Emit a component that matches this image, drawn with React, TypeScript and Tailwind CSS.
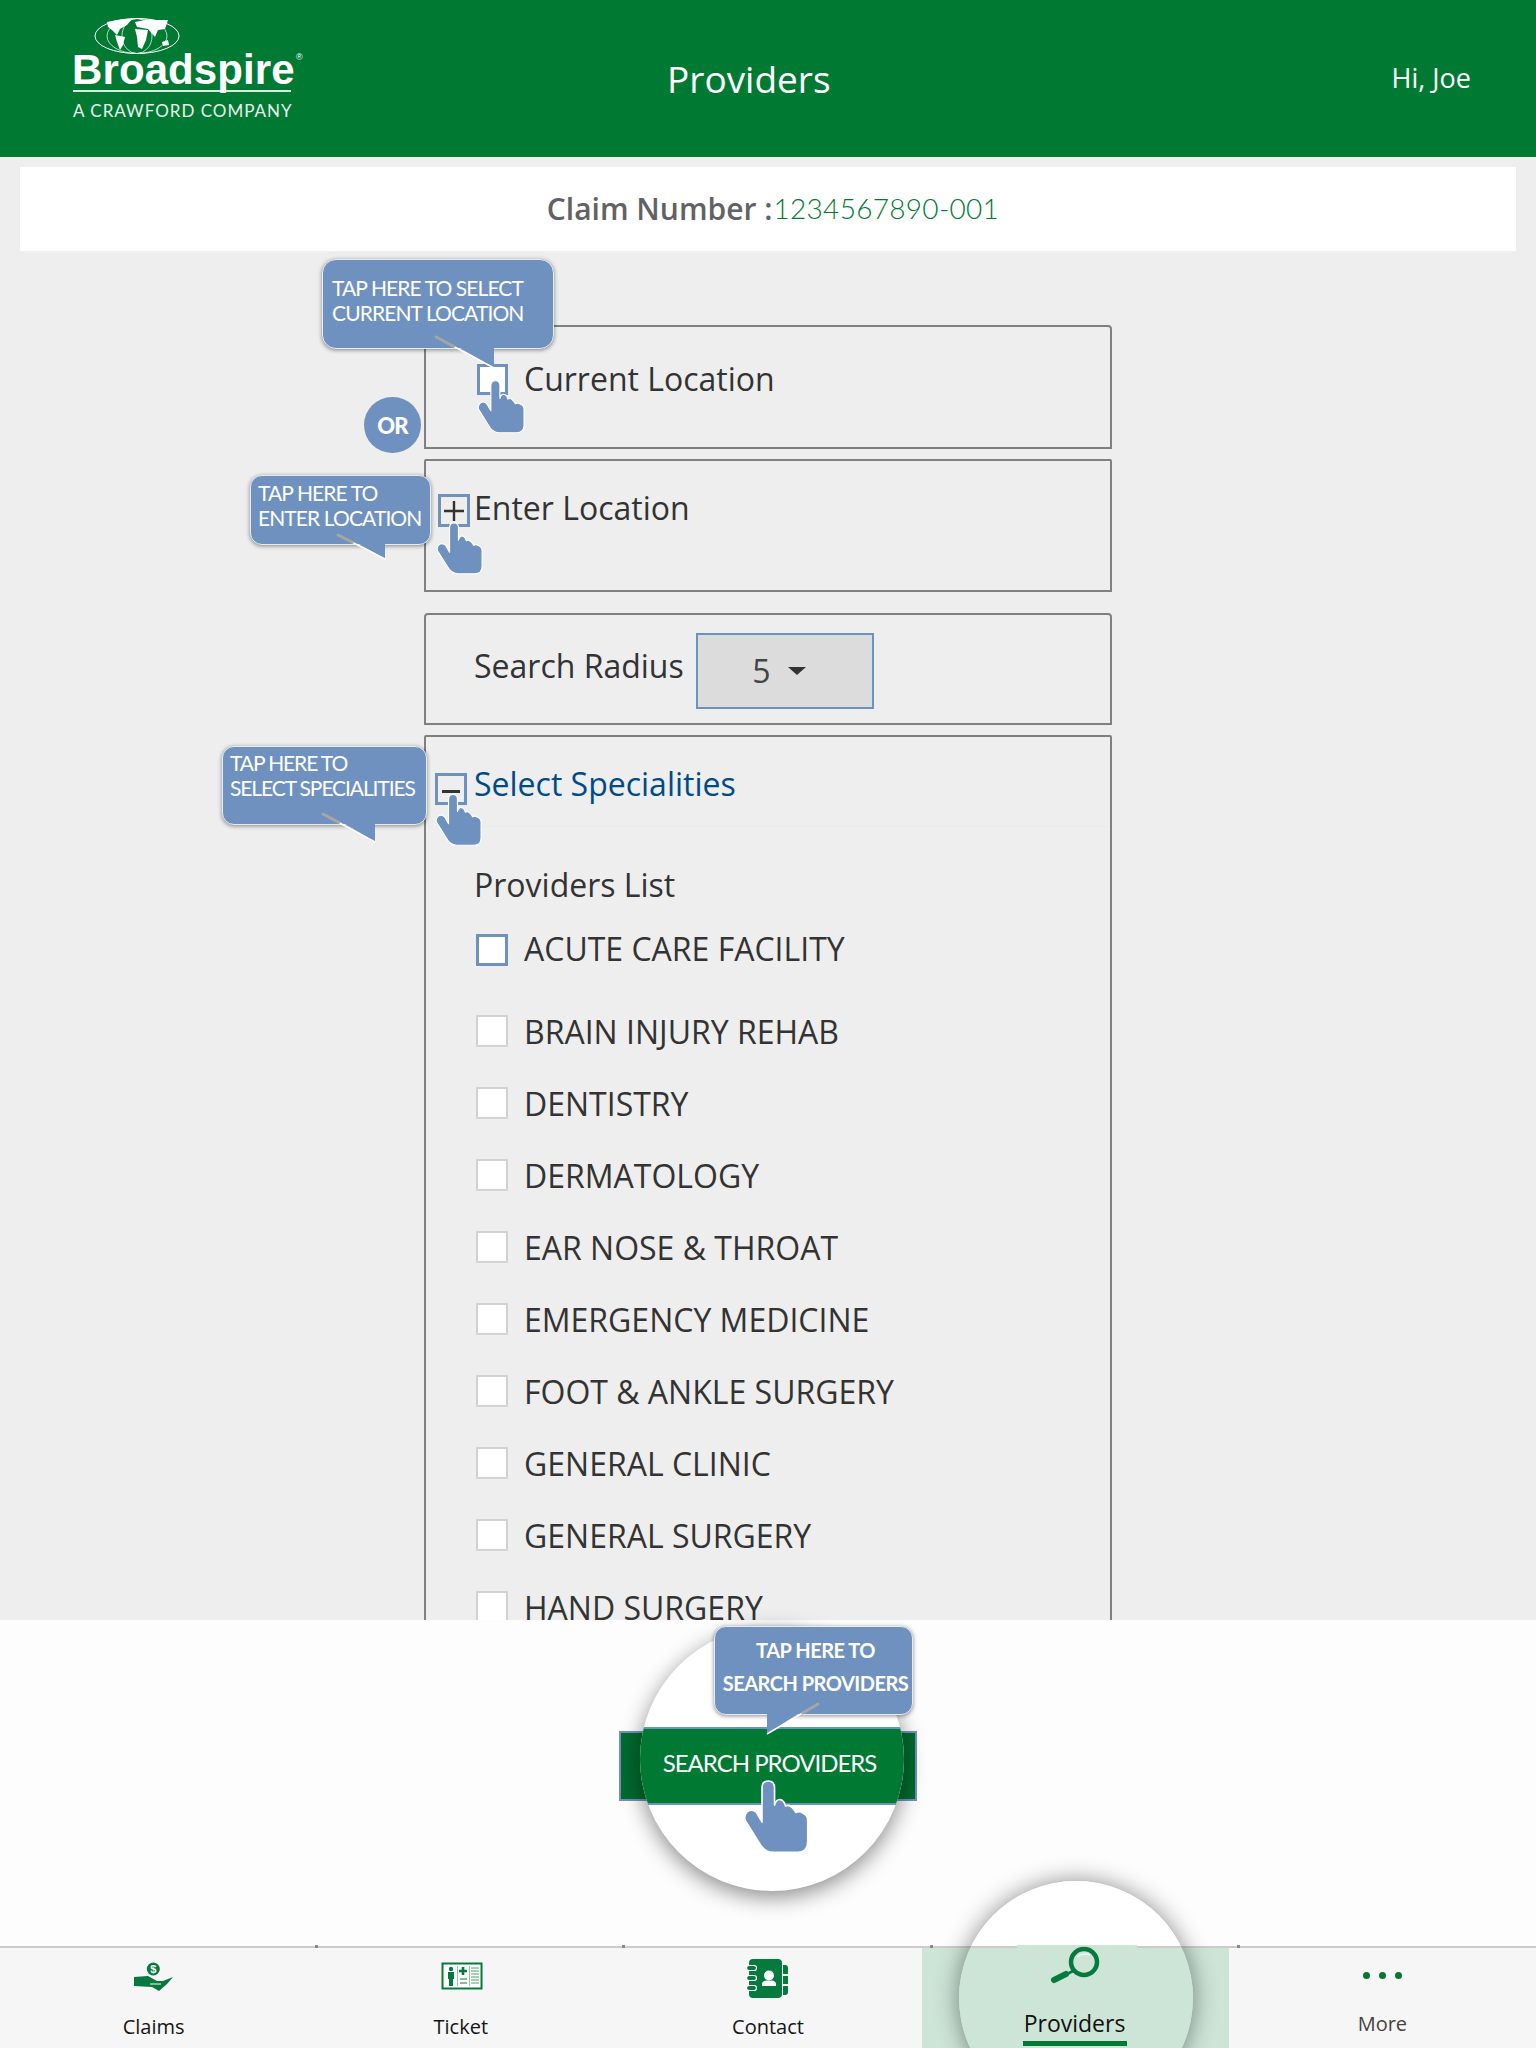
import React from "react";

const HAND = "M55 22 Q55 0 75 0 Q94 0 94 22 L94 75 Q100 55 112 58 Q124 60 128 78 Q138 72 148 82 Q155 88 160 98 Q170 92 182 100 Q197 106 197 122 L197 190 Q197 222 165 222 L90 222 Q62 222 45 190 L4 124 Q-4 108 10 95 Q25 85 38 98 L55 128 Z";

function Hand({ className }: { className: string }) {
  return (
    <svg viewBox="-4 -2 205 228" className={className}>
      <path d={HAND} fill="#6f91bf" stroke="#ffffff" strokeWidth="5" strokeLinejoin="round" />
    </svg>
  );
}

function Tail({ w, h, poly, line }: { w: number; h: number; poly: string; line: [number, number, number, number] }) {
  return (
    <svg width={w} height={h + 22} className="absolute left-0 top-0 overflow-visible">
      <polygon points={poly} fill="#6f91bf" />
      <line x1={line[0]} y1={line[1]} x2={line[2]} y2={line[3]} stroke="#ffffff" strokeWidth="1.5" />
      <line x1={line[0]} y1={line[1]} x2={line[0] + (line[2] - line[0]) * 0.3} y2={line[1] + (line[3] - line[1]) * 0.3} stroke="#a5a5a5" strokeWidth="3" strokeLinecap="round" />
    </svg>
  );
}

function Check({ active }: { active?: boolean }) {
  return <span className={active ? "block h-[32px] w-[32px] shrink-0 border-[3px] border-[#6f91bf] bg-white" : "block h-[32px] w-[32px] shrink-0 border-2 border-[#d2d2d2] bg-white"} />;
}

const items = ["BRAIN INJURY REHAB", "DENTISTRY", "DERMATOLOGY", "EAR NOSE & THROAT", "EMERGENCY MEDICINE", "FOOT & ANKLE SURGERY", "GENERAL CLINIC", "GENERAL SURGERY", "HAND SURGERY"];

function Logo() {
  return (
    <div className="relative h-[157px] w-[300px] pl-[72px] pt-[17px] text-white">
      <svg width="88" height="38" viewBox="0 0 88 38" className="ml-[22px] block" fill="none" stroke="#ffffff">
        <ellipse cx="43" cy="19" rx="42" ry="17.5" strokeWidth="1" />
        <ellipse cx="43" cy="19" rx="30" ry="17.5" strokeWidth="0.7" />
        <ellipse cx="43" cy="19" rx="15" ry="17.5" strokeWidth="0.7" />
        <g fill="#ffffff" stroke="none">
          <polygon points="13,5 23,3 38,2 33,8 26,12 23,18 18,13 14,10" />
          <polygon points="21,18 31,20 29,28 26,33 23,25" />
          <polygon points="41,5 51,3 74,3 71,12 64,13 61,20 54,12 43,10" />
          <polygon points="41,12 54,13 52,23 48,32 44,30 43,20" />
          <polygon points="68,25 74,23 75,28 69,29" />
        </g>
      </svg>
      <div className="relative -mt-[4px] h-[38px] w-[222px] whitespace-nowrap font-['Liberation_Sans'] text-[42px] font-bold leading-[38px] tracking-[0.1px]">
        Broadspire
        <span className="absolute left-[224px] top-[-4px] text-[9px] font-normal leading-[20px] tracking-normal">®</span>
      </div>
      <div className="ml-[1px] mt-[1px] h-[2px] w-[218px] bg-[#d9ebdf]" />
      <div className="ml-[1px] mt-[9px] whitespace-nowrap font-['Lato'] text-[17px] leading-[20px] tracking-[1px] text-[#e9f3ec]">A CRAWFORD COMPANY</div>
    </div>
  );
}

function NavItem({ label, icon, tick, bold, children }: { label: string; icon: React.ReactNode; tick?: boolean; bold?: boolean; children?: React.ReactNode }) {
  return (
    <div className={bold ? "relative flex flex-col items-center bg-[#cde5d7]" : "relative flex flex-col items-center"}>
      {tick && <span className="absolute left-[8px] top-[-3px] h-[3px] w-[3px] bg-[#8a8a8a]" />}
      <div className="flex h-[64px] w-full justify-center">{icon}</div>
      {children ? children : <div className="h-[30px] text-[20px] leading-[30px] text-[#151515]">{label}</div>}
    </div>
  );
}

const G = "#067a3c";

export default function App() {
  return (
    <div className="relative flex h-[2048px] w-[1536px] flex-col overflow-hidden bg-[#eeeeee] font-['Open_Sans',sans-serif]">
      <header className="relative flex h-[157px] shrink-0 items-start justify-between bg-[#007a33] text-white">
        <Logo />
        <div className="absolute left-[667px] top-[52px] text-[37px] font-medium leading-[54px]">Providers</div>
        <div className="mr-[65px] mt-[58px] text-[27px] leading-[40px]">Hi, Joe</div>
      </header>

      <main className="min-h-0 flex-1 overflow-hidden pt-[10px]">
        <div className="mx-[20px] flex h-[84px] items-center justify-center bg-white pl-[10px]">
          <span className="-mt-[1px] text-[30px] font-semibold text-[#616166]">Claim Number :</span>
          <span className="-mt-[3px] ml-[1px] font-['Lato'] text-[28px] font-light tracking-[0.3px] text-[#007a33]">1234567890-001</span>
        </div>

        <div className="ml-[424px] mt-[74px] w-[688px]">
          <section className="h-[124px] rounded-t-[4px] border-2 border-[#808080] pl-[51px] pt-[37px]">
            <div className="flex h-[31px] items-center gap-[16px] text-[#333333]">
              <span className="block h-[31px] w-[31px] shrink-0 border-[3px] border-[#6f91bf] bg-white" />
              <span className="-mt-[2px] text-[32px] leading-[40px]">Current Location</span>
            </div>
          </section>

          <section className="mt-[10px] h-[133px] rounded-t-[2px] border-2 border-[#808080] pl-[12px] pt-[33px]">
            <div className="flex h-[33px] items-center gap-[4px] text-[#333333]">
              <span className="flex h-[33px] w-[32px] shrink-0 items-center justify-center border-[3px] border-[#6f91bf]">
                <svg width="20" height="20" viewBox="0 0 20 20"><path d="M10 0V20M0 10H20" stroke="#333" strokeWidth="2.4" /></svg>
              </span>
              <span className="-mt-[6px] text-[32px] leading-[40px]">Enter Location</span>
            </div>
          </section>

          <section className="mt-[21px] flex h-[112px] items-start rounded-t-[4px] border-2 border-[#808080] pl-[48px] pt-[18px]">
            <span className="mt-[13px] w-[222px] text-[32px] leading-[40px] text-[#333333]">Search Radius</span>
            <div className="flex h-[76px] w-[178px] items-center justify-center gap-[17px] border-2 border-[#6f91bf] bg-[#dcdcdc] pr-[12px]">
              <span className="text-[32px] leading-[40px] text-[#444444]">5</span>
              <span className="h-0 w-0 border-x-[9px] border-t-[8px] border-x-transparent border-t-[#333333]" />
            </div>
          </section>

          <section className="mt-[10px] h-[1000px] rounded-t-[2px] border-2 border-[#808080]">
            <div className="flex h-[90px] items-start gap-[7px] border-b border-[#eaeaea] pl-[9px] pt-[36px]">
              <span className="flex h-[32px] w-[32px] shrink-0 items-center justify-center border-[3px] border-[#6f91bf]">
                <span className="mt-[4px] block h-[3px] w-[18px] bg-[#333333]" />
              </span>
              <span className="-mt-[9px] text-[32px] leading-[40px] text-[#004b87]">Select Specialities</span>
            </div>
            <div className="ml-[48px] mt-[36px] text-[32px] leading-[44px] text-[#333333]">Providers List</div>
            <div className="ml-[50px] mt-[27px] flex h-[32px] items-center gap-[16px]">
              <Check active />
              <span className="-mt-[2px] text-[32px] leading-[40px] text-[#333333]">ACUTE CARE FACILITY</span>
            </div>
            <div className="ml-[50px] mt-[49px] flex flex-col gap-[40px]">
              {items.map((t) => (
                <div key={t} className="flex h-[32px] items-center gap-[16px]">
                  <Check />
                  <span className="pt-[2px] text-[32px] leading-[40px] text-[#333333]">{t}</span>
                </div>
              ))}
            </div>
          </section>
        </div>
      </main>

      <footer className="relative z-10 h-[326px] shrink-0 bg-[#fdfdfd] pt-[111px]">
        <div className="mx-auto h-[70px] w-[298px] border-2 border-[#6f91bf] bg-[#006b2d]" />
      </footer>

      <nav className="relative z-10 grid h-[102px] shrink-0 grid-cols-5 border-t-2 border-[#cccccc] bg-[#f6f6f6]">
        <NavItem label="Claims" icon={
          <svg width="70" height="50" viewBox="0 0 70 50" className="ml-[2px]">
            <circle cx="33.3" cy="21" r="6.5" fill={G} />
            <text x="33.3" y="25" textAnchor="middle" fontSize="11" fontWeight="700" fill="#ffffff" fontFamily="Liberation Sans">$</text>
            <polygon points="14,29 28,28 37,33 43,33 53,29 47,36 39,43 32,39 14,38" fill={G} />
            <path d="M30 36H41" stroke="#ffffff" strokeWidth="1" />
          </svg>
        } />
        <NavItem label="Ticket" tick icon={
          <svg width="60" height="45" viewBox="0 0 60 45" className="mt-[6px]">
            <rect x="11.5" y="9.5" width="39" height="25" fill="#ffffff" stroke={G} strokeWidth="2" />
            <circle cx="20" cy="15" r="2.2" fill={G} />
            <path d="M17 18H23V25H22V32H18V25H17Z" fill={G} />
            <path d="M26.5 12V32" stroke="#8fc4a5" strokeWidth="1" />
            <path d="M32 13V21M28 17H36" stroke={G} strokeWidth="2.6" />
            <path d="M29 25H36M29 29H36" stroke={G} strokeWidth="1.2" />
            <path d="M38.5 12V32" stroke="#8fc4a5" strokeWidth="1" />
            <path d="M40 14H48M40 17H48M40 20H48M40 23H48M40 26H48M40 29H48" stroke="#4c9f6f" strokeWidth="1.2" />
          </svg>
        } />
        <NavItem label="Contact" tick icon={
          <svg width="60" height="55" viewBox="0 0 60 55" className="ml-[2px] mt-[2px]">
            <rect x="10" y="9" width="33" height="39" rx="4" fill={G} />
            <path d="M44 15H46Q49 15 49 18V24H44ZM44 26H49V34H44ZM44 36H49V42Q49 45 46 45H44Z" fill={G} />
            <g fill={G} stroke="#ffffff" strokeWidth="1.2">
              <rect x="7.5" y="15.5" width="10" height="5" rx="2.5" />
              <rect x="7.5" y="25.5" width="10" height="5" rx="2.5" />
              <rect x="7.5" y="35.5" width="10" height="5" rx="2.5" />
            </g>
            <circle cx="30" cy="25.5" r="5" fill="#ffffff" />
            <path d="M23 36V34Q23 31 27 30.5H33Q37 31 37 34V36Z" fill="#ffffff" />
          </svg>
        } />
        <NavItem label="" tick bold icon={<span />} />
        <NavItem label="More" tick icon={
          <div className="mt-[24px] flex h-[8px] gap-[9px]">
            <span className="h-[7px] w-[7px] rounded-full bg-[#007a33]" />
            <span className="h-[7px] w-[7px] rounded-full bg-[#007a33]" />
            <span className="h-[7px] w-[7px] rounded-full bg-[#007a33]" />
          </div>
        }>
          <div className="-mt-[3px] h-[30px] text-[20px] leading-[30px] text-[#444444]">More</div>
        </NavItem>
      </nav>

      {/* Search spotlight */}
      <div className="absolute left-[640px] top-[1627px] z-20 h-[264px] w-[264px] overflow-hidden rounded-full bg-white shadow-[0_6px_22px_rgba(0,0,0,0.45)]">
        <div className="absolute left-0 top-[100px] flex h-[78px] w-[264px] items-center justify-center border-y-2 border-[#6f91bf] bg-[#007a33] pb-[6px] pr-[5px] font-['Lato'] text-[24px] tracking-[-1px] text-white">
          SEARCH PROVIDERS
        </div>
      </div>

      {/* Providers spotlight */}
      <div className="absolute left-[959px] top-[1881px] z-20 h-[234px] w-[234px] rounded-full bg-[linear-gradient(to_bottom,#ffffff_0,#ffffff_65px,#cccccc_65px,#cccccc_67px,#cde5d7_67px)] shadow-[0_0_24px_rgba(0,0,0,0.45)]">
        <div className="absolute left-[58px] top-[64px] h-[3px] w-[120px] bg-[#cde5d7]" />
        <svg width="70" height="50" viewBox="0 0 70 50" className="absolute left-[81px] top-[59px]">
          <circle cx="44" cy="22" r="13" fill="none" stroke={G} strokeWidth="4.5" />
          <path d="M37 17Q43 12 50 15" fill="none" stroke="#ffffff" strokeWidth="1" />
          <path d="M33 31L27 34" stroke={G} strokeWidth="3" />
          <path d="M26 34L14 40" stroke={G} strokeWidth="6" strokeLinecap="round" />
        </svg>
        <div className="absolute left-0 top-[126px] w-[234px] pr-[3px] text-center text-[23px] leading-[32px] text-[#111111]">Providers</div>
        <div className="absolute left-[64px] top-[160px] h-[5px] w-[104px] bg-[#007a33]" />
      </div>

      {/* Coach marks */}
      <div className="absolute left-[322px] top-[259px] z-30 h-[90px] w-[232px] whitespace-nowrap rounded-[14px] border border-[#e6ebf2] bg-[#6f91bf] pl-[9px] pt-[15px] font-['Lato'] text-[21px] leading-[25px] tracking-[-0.9px] text-white shadow-[0_1px_4px_rgba(0,0,0,0.45)]">
        <Tail w={232} h={90} poly="137,88 171,88 171,108" line={[113, 77, 171, 108]} />
        <div className="relative">TAP HERE TO SELECT<br />CURRENT LOCATION</div>
      </div>
      <Hand className="absolute left-[477px] top-[380px] z-30 h-[54px] w-[48px]" />

      <div className="absolute left-[364px] top-[397px] z-30 flex h-[56px] w-[57px] items-center justify-center rounded-full bg-[#6f91bf] font-['Lato'] text-[22px] font-black tracking-[-0.8px] text-white">OR</div>

      <div className="absolute left-[250px] top-[475px] z-30 h-[70px] w-[181px] whitespace-nowrap rounded-[12px] border border-[#e6ebf2] bg-[#6f91bf] pl-[7px] pt-[4px] font-['Lato'] text-[21px] leading-[25px] tracking-[-0.9px] text-white shadow-[0_1px_4px_rgba(0,0,0,0.45)]">
        <Tail w={181} h={70} poly="108,68 134,68 134,83" line={[87, 59, 134, 83]} />
        <div className="relative">TAP HERE TO<br />ENTER LOCATION</div>
      </div>
      <Hand className="absolute left-[436px] top-[522px] z-30 h-[53px] w-[47px]" />

      <div className="absolute left-[222px] top-[746px] z-30 h-[79px] w-[205px] whitespace-nowrap rounded-[12px] border border-[#e6ebf2] bg-[#6f91bf] pl-[7px] pt-[3px] font-['Lato'] text-[21px] leading-[25px] tracking-[-1.1px] text-white shadow-[0_1px_4px_rgba(0,0,0,0.45)]">
        <Tail w={205} h={79} poly="122,77 152,77 152,95" line={[100, 67, 152, 95]} />
        <div className="relative">TAP HERE TO<br />SELECT SPECIALITIES</div>
      </div>
      <Hand className="absolute left-[435px] top-[793px] z-30 h-[54px] w-[47px]" />

      <div className="absolute left-[714px] top-[1626px] z-30 h-[89px] w-[199px] whitespace-nowrap rounded-[12px] border border-[#e6ebf2] bg-[#6f91bf] pl-[4px] pt-[7px] text-center font-['Lato'] text-[20px] font-bold leading-[33px] tracking-[-0.5px] text-white shadow-[0_1px_4px_rgba(0,0,0,0.45)]">
        <Tail w={199} h={89} poly="52,87 83,87 52,107" line={[103, 77, 52, 107]} />
        <div className="relative">TAP HERE TO<br />SEARCH PROVIDERS</div>
      </div>
      <Hand className="absolute left-[743px] top-[1779px] z-30 h-[76px] w-[66px]" />
    </div>
  );
}
